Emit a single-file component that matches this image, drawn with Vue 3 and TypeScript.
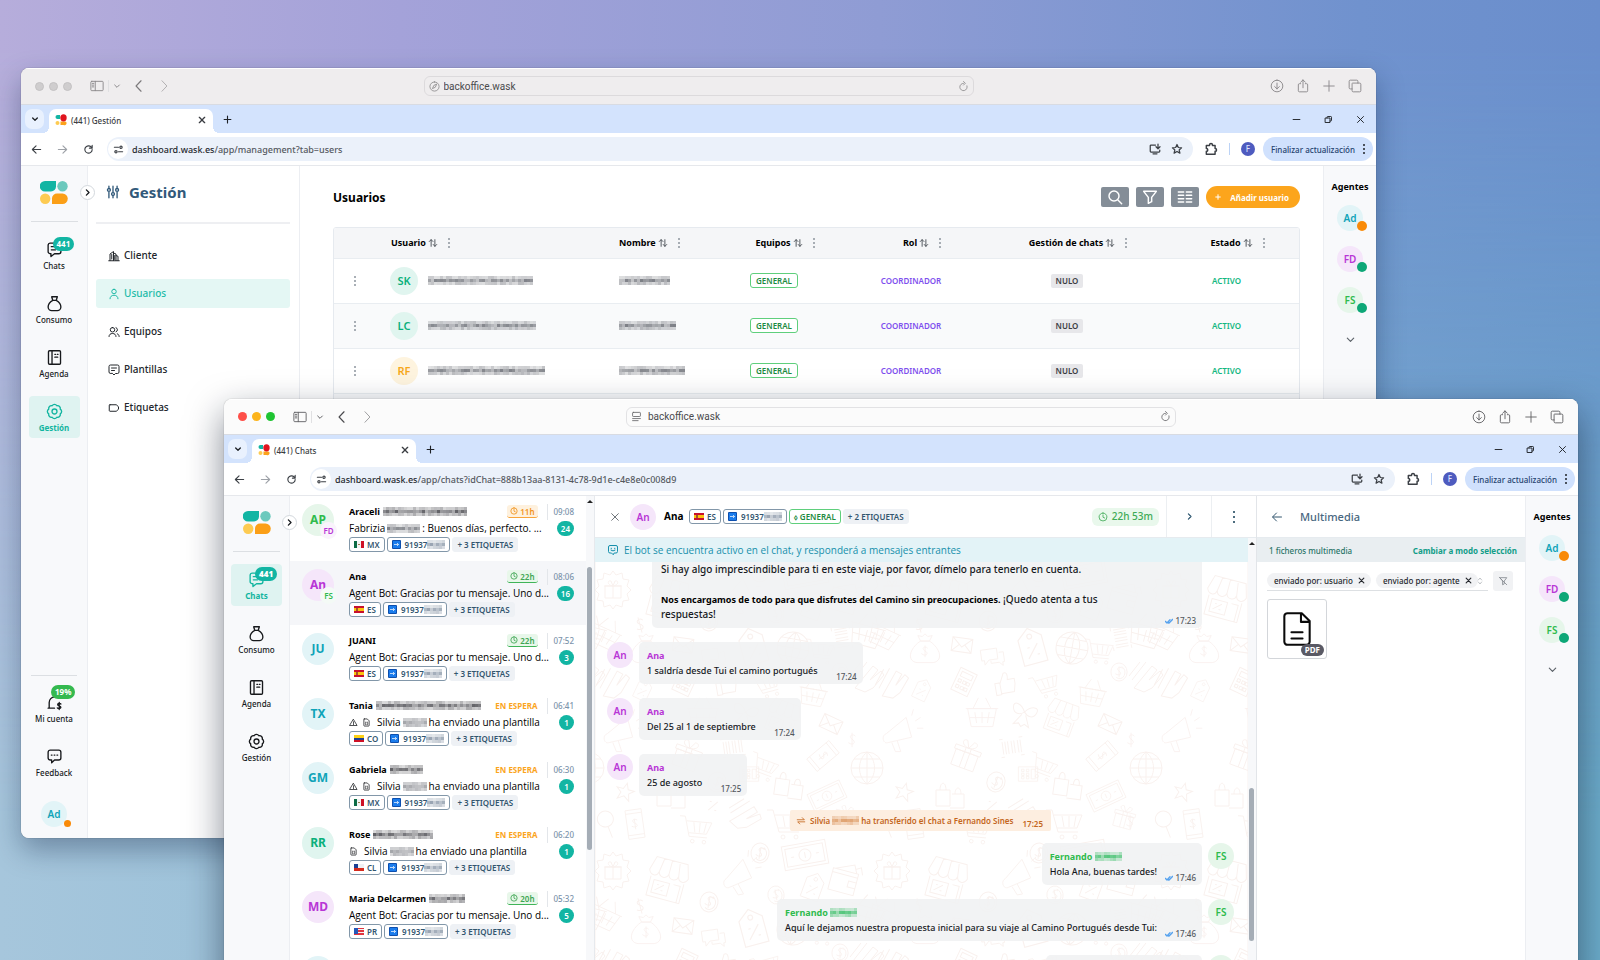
<script setup lang="ts">
import { h } from 'vue'

function scallop(lobes: number, radius: number, arc: number): string {
  const pts = Array.from({ length: lobes }, (_, i) => {
    const a = ((i + 0.5) / lobes) * Math.PI * 2
    return `${(12 + radius * Math.cos(a)).toFixed(2)} ${(12 + radius * Math.sin(a)).toFixed(2)}`
  })
  return `M${pts[0]}` + [...pts.slice(1), pts[0]].map((p) => `A${arc} ${arc} 0 0 1 ${p}`).join('') + 'z'
}

const icons: Record<string, string> = {
  sidebar: 'M3 4h18a1.5 1.5 0 0 1 1.5 1.5v13A1.5 1.5 0 0 1 21 20H3a1.5 1.5 0 0 1-1.500-1.500v-13A1.500 1.500 0 0 1 3 4zM9 4v16M4 7.500h2.500M4 10.500h2.500M4 13.500h2.500',
  down: 'M5 9l7 7 7-7',
  left: 'M15.500 3L7 12l8.500 9',
  right: 'M8.500 3L17 12l-8.500 9',
  next: 'M9 5l7 7-7 7',
  compass: 'M12 2a10 10 0 1 0 0 20 10 10 0 0 0 0-20zM16.500 7.500l-2.800 6.200-6.200 2.800 2.800-6.200z',
  page: 'M5 3h14a1.500 1.500 0 0 1 1.500 1.500v6A1.500 1.500 0 0 1 19 12H5a1.500 1.500 0 0 1-1.500-1.500v-6A1.500 1.500 0 0 1 5 3zM3.500 16.500h17M3.500 21h12',
  refresh: 'M12 5a8 8 0 1 0 7.600 5.500M12 1l4 4-4 4',
  download: 'M12 2a10 10 0 1 0 0 20 10 10 0 0 0 0-20zM12 7v10M8 13l4 4 4-4',
  share: 'M8 8H6a2 2 0 0 0-2 2v10a2 2 0 0 0 2 2h12a2 2 0 0 0 2-2V10a2 2 0 0 0-2-2h-2M12 15V1.500M8 5.500l4-4 4 4',
  plus: 'M12 3v18M3 12h18',
  tabs: 'M8 7h12a2 2 0 0 1 2 2v11a2 2 0 0 1-2 2H9a2 2 0 0 1-2-2V8M7 17H4a2 2 0 0 1-2-2V4a2 2 0 0 1 2-2h11a2 2 0 0 1 2 2v3',
  close: 'M4 4l16 16M20 4L4 20',
  min: 'M3 12h18',
  restore: 'M4 8h12v12H4zM8 8V6q0-2 2-2h8q2 0 2 2v8q0 2-2 2h-2',
  back: 'M21 12H4M11 4l-8 8 8 8',
  fwd: 'M3 12h17M13 4l8 8-8 8',
  reload: 'M20 12a8 8 0 1 1-2.300-5.600L20 9M20 3v6h-6',
  tune: 'M3 7h9M12 17h9M15 7h.01M17.500 4.500a2.500 2.500 0 1 0 0 5 2.500 2.500 0 0 0 0-5zM6.500 14.500a2.500 2.500 0 1 0 0 5 2.500 2.500 0 0 0 0-5z',
  install: 'M13 4H4a1.500 1.500 0 0 0-1.500 1.500v11A1.500 1.500 0 0 0 4 18h16a1.500 1.500 0 0 0 1.500-1.500V14M8 21.500h8M18 2v9M14 7.500l4 4 4-4',
  star: 'M12 3l2.700 6 6.500.600-4.900 4.300 1.500 6.400L12 17l-5.800 3.300 1.500-6.400-4.900-4.300 6.500-.600z',
  puzzle: 'M4 6h5.500V5a2.500 2.500 0 0 1 5 0v1H19v5a2.500 2.500 0 0 1 0 5v5H4v-5a2.500 2.500 0 0 0 0-5z',
  chats: 'M16 18h-4l-5 4v-4H6a3 3 0 0 1-3-3V6a3 3 0 0 1 3-3h12a3 3 0 0 1 3 3v9a3 3 0 0 1-3 3h-2M7.500 8h9M7.500 12.500h6',
  bag: 'M8 2.500h8l-1.500 5h-5zM9.500 7.500C6 9.500 3 13 3 17a5 5 0 0 0 5 5h8a5 5 0 0 0 5-5c0-4-3-7.500-6.500-9.500',
  agenda: 'M5 2.500h14A1.500 1.500 0 0 1 20.500 4v16a1.500 1.500 0 0 1-1.500 1.500H5A1.500 1.500 0 0 1 3.500 20V4A1.500 1.500 0 0 1 5 2.500zM8.500 2.500v19M12.500 7.500h1M16 7.500h1M12.500 11.500h4',
  gear: scallop(8, 8.8, 3.9) + 'M12 8.500a3.500 3.500 0 1 0 0 7 3.500 3.500 0 0 0 0-7z',
  account: 'M3 20h9M4.500 20v-8A8 8 0 0 1 12 4M21 14c-1-1-4.500-1-4.500 1s4.500 1.500 4.500 3.800-4 2.200-5 .800M18.700 12v10',
  feedback: 'M16 17h-4l-4 4v-4H6a3 3 0 0 1-3-3V6a3 3 0 0 1 3-3h12a3 3 0 0 1 3 3v8a3 3 0 0 1-3 3h-2M7.500 10h1M11.500 10h1M15.500 10h1',
  sliders: 'M5 2v4M5 11v11M12 2v11M12 18v4M19 2v4M19 11v11M5 6a2.500 2.500 0 1 0 0 5 2.500 2.500 0 0 0 0-5zM12 13a2.500 2.500 0 1 0 0 5 2.500 2.500 0 0 0 0-5zM19 6a2.500 2.500 0 1 0 0 5 2.500 2.500 0 0 0 0-5z',
  building: 'M1.500 21.500h21M4 21V8l7-5v18M11 6l5 2v13M16 11l4 1.500V21M7.500 9v9M13.500 11v8',
  user: 'M12 2.500a4.500 4.500 0 1 0 0 9 4.500 4.500 0 0 0 0-9zM4 21.500c0-4 3-7 8-7s8 3 8 7',
  users: 'M9 3a4.500 4.500 0 1 0 0 9 4.500 4.500 0 0 0 0-9zM2 21c0-4 3-6 7-6s7 2 7 6M16 3.300a4.500 4.500 0 0 1 0 8.400M18.500 15.500c2.500 1 3.800 3 3.800 5.500',
  template: 'M9 19l3 3 3-3h4a3 3 0 0 0 3-3V5a3 3 0 0 0-3-3H5a3 3 0 0 0-3 3v11a3 3 0 0 0 3 3zM7 8h10M7 13h6',
  label: 'M4 5.500h12.500l4.500 4v5l-4.500 4H4a1.500 1.500 0 0 1-1.500-1.500V7A1.500 1.500 0 0 1 4 5.500z',
  sort: 'M7.500 20V4M3 8.500L7.500 4 12 8.500M16.500 4v16M12.500 15.500l4 4.500 4.500-4.500',
  search: 'M10.500 3a7.500 7.500 0 1 0 0 15 7.500 7.500 0 0 0 0-15zM16 16l6 6',
  filter: 'M2.500 3.500h19l-7 9V19l-5 2.500v-9z',
  filterOff: 'M6 4h15l-6 8v7l-4 2v-9L5 5M3 3l18 18',
  columns: 'M2 4.500h8M2 9.500h8M2 14.500h8M2 19.500h8M14 4.500h8M14 9.500h8M14 14.500h8M14 19.500h8',
  clock: 'M12 2.500a9.500 9.500 0 1 0 0 19 9.500 9.500 0 0 0 0-19zM12 7v5.500l4 2',
  warn: 'M12 4l9.500 16h-19zM12 10v4.500M12 16.500v1',
  file: 'M6 2.500h8l5 5V20a1.500 1.500 0 0 1-1.500 1.500h-11A1.500 1.500 0 0 1 5 20V4A1.500 1.500 0 0 1 6 2.500zM10 11v3l-1 1 1 1v2M14 11v3l1 1-1 1v2',
  doc: 'M6 2h9l5 5v13a2 2 0 0 1-2 2H6a2 2 0 0 1-2-2V4a2 2 0 0 1 2-2zM14.500 2v5.500H20M8.500 14h7M8.500 18h7',
  swap: 'M3 9h17l-5-5M21 14H4l5 5',
  bot: 'M15 18h3a3 3 0 0 0 3-3V6a3 3 0 0 0-3-3H6a3 3 0 0 0-3 3v9a3 3 0 0 0 3 3h3l3 3zM8.500 8.500v1M15.500 8.500v1M8 12.500q4 3 8 0',
  checks: 'M1 13l5 5L15 8M10 17l1.500 1.500L23 7',
  updown: 'M7 9l5-6 5 6M7 15l5 6 5-6',
}
const Icon = (p: { n: string }) =>
  h('svg', { viewBox: '0 0 24 24', class: 'ic', 'aria-hidden': 'true' }, [h('path', { d: icons[p.n] })])
Icon.props = ['n']

/* Redacted text: a strip of blocky cells */
const tones: Record<string, [number, number, number]> = {
  dark: [60, 60, 66],
  mid: [95, 98, 106],
  soft: [125, 140, 158],
  green: [40, 185, 90],
  orange: [215, 140, 80],
}
const Mosaic = (p: { w: number; tone: string }) => {
  const c = tones[p.tone] ?? tones.mid
  const cells = []
  const n = Math.floor(p.w / 3)
  for (let i = 0; i < n; i++) {
    for (let r = 0; r < 3; r++) {
      const seed = Math.abs(Math.sin((i + 1) * 12.9 + r * 78.2 + p.w * 3.1) * 43758.5) % 1
      const base = r === 1 ? 0.62 : r === 0 ? 0.3 : 0.34
      const a = (base * (0.6 + seed * 0.7)).toFixed(2)
      cells.push(h('rect', { x: i * 3, y: r * 3, width: 3, height: 3, fill: `rgba(${c.join(',')},${a})` }))
    }
  }
  return h('svg', { class: 'mosaic', width: p.w, height: 9, 'shape-rendering': 'crispEdges', 'aria-hidden': 'true' }, cells)
}
Mosaic.props = ['w', 'tone']

const flags: Record<string, [string, number, number, number, number][]> = {
  ES: [['#c8102e', 0, 0, 10, 7], ['#fcc40f', 0, 2, 10, 3], ['#a5532b', 2, 2, 2, 3]],
  MX: [['#f4f4f4', 0, 0, 10, 7], ['#0d6b45', 0, 0, 3, 7], ['#ce1126', 7, 0, 3, 7], ['#a08050', 4, 3, 2, 1]],
  CO: [['#fcd116', 0, 0, 10, 7], ['#1b3f94', 0, 3, 10, 2], ['#ce1126', 0, 5, 10, 2]],
  CL: [['#eef0f4', 0, 0, 10, 7], ['#d52b1e', 0, 4, 10, 3], ['#1b3f94', 0, 0, 4, 4]],
  PR: [['#e2353f', 0, 0, 10, 7], ['#f4f4f4', 0, 1, 10, 1], ['#f4f4f4', 0, 4, 10, 1], ['#2458b8', 0, 0, 4, 6]],
}
const Flag = (p: { c: string }) =>
  h('svg', { class: 'flag', viewBox: '0 0 10 7', 'aria-hidden': 'true' },
    flags[p.c].map(([fill, x, y, width, height]) => h('rect', { fill, x, y, width, height })))
Flag.props = ['c']

const Arrow = () =>
  h('svg', { class: 'arrow', viewBox: '0 0 9 9', 'aria-hidden': 'true' }, [
    h('rect', { width: 9, height: 9, rx: 1, fill: '#0d4fae' }),
    h('rect', { x: 1, y: 1, width: 7, height: 7, fill: '#1b7cec' }),
    h('path', { d: 'M2 4.500h4.500M5 3l1.500 1.500L5 6', fill: 'none', stroke: '#fff', 'stroke-width': 0.7 }),
  ])

interface Win { kind: 'manage' | 'chats'; site: string; tab: string; domain: string; path: string; active: string }
const windows: Win[] = [
  { kind: 'manage', site: 'compass', tab: '(441) Gestión', domain: 'dashboard.wask.es', path: '/app/management?tab=users', active: 'Gestión' },
  { kind: 'chats', site: 'page', tab: '(441) Chats', domain: 'dashboard.wask.es', path: '/app/chats?idChat=888b13aa-8131-4c78-9d1e-c4e8e0c008d9', active: 'Chats' },
]
const nav = [
  { n: 'Chats', i: 'chats', badge: '441' },
  { n: 'Consumo', i: 'bag', badge: '' },
  { n: 'Agenda', i: 'agenda', badge: '' },
  { n: 'Gestión', i: 'gear', badge: '' },
]
const menu = [
  { n: 'Cliente', i: 'building' },
  { n: 'Usuarios', i: 'user' },
  { n: 'Equipos', i: 'users' },
  { n: 'Plantillas', i: 'template' },
  { n: 'Etiquetas', i: 'label' },
]
const agents = [
  { t: 'Ad', c: 'cyan', s: 'away' },
  { t: 'FD', c: 'purple', s: 'online' },
  { t: 'FS', c: 'green', s: 'online' },
]
const columns = ['Usuario', 'Nombre', 'Equipos', 'Rol', 'Gestión de chats', 'Estado']
const users = [
  { t: 'SK', c: 'emerald', mail: 105, name: 51 },
  { t: 'LC', c: 'emerald', mail: 108, name: 57 },
  { t: 'RF', c: 'amber', mail: 117, name: 66 },
]
interface Chat {
  t: string; c: string; sub?: string; subc?: string; name: string; nw: number; wait: string; tone?: string
  time: string; icons?: string[]; a: string; mw?: number; b?: string; n: string; flag: string
}
const bot = 'Agent Bot: Gracias por tu mensaje. Uno d...'
const tpl = 'ha enviado una plantilla'
const chats: Chat[] = [
  { t: 'AP', c: 'green', sub: 'FD', subc: 'purple', name: 'Araceli', nw: 84, wait: '11h', tone: 'warm', time: '09:08', a: 'Fabrizia', mw: 33, b: ': Buenos días, perfecto. ...', n: '24', flag: 'MX' },
  { t: 'An', c: 'purple', sub: 'FS', subc: 'green', name: 'Ana', nw: 0, wait: '22h', time: '08:06', a: bot, n: '16', flag: 'ES' },
  { t: 'JU', c: 'cyan', name: 'JUANI', nw: 0, wait: '22h', time: '07:52', a: bot, n: '3', flag: 'ES' },
  { t: 'TX', c: 'cyan', name: 'Tania', nw: 105, wait: '', time: '06:41', icons: ['warn', 'file'], a: 'Silvia', mw: 24, b: tpl, n: '1', flag: 'CO' },
  { t: 'GM', c: 'cyan', name: 'Gabriela', nw: 33, wait: '', time: '06:30', icons: ['warn', 'file'], a: 'Silvia', mw: 24, b: tpl, n: '1', flag: 'MX' },
  { t: 'RR', c: 'emerald', name: 'Rose', nw: 60, wait: '', time: '06:20', icons: ['file'], a: 'Silvia', mw: 24, b: tpl, n: '1', flag: 'CL' },
  { t: 'MD', c: 'purple', name: 'Maria Delcarmen', nw: 36, wait: '20h', time: '05:32', a: bot, n: '5', flag: 'PR' },
]
const incoming = [
  { text: '1 saldría desde Tui el camino portugués', time: '17:24' },
  { text: 'Del 25 al 1 de septiembre', time: '17:24' },
  { text: '25 de agosto', time: '17:25' },
]
const outgoing = [
  { text: 'Hola Ana, buenas tardes!', time: '17:46' },
  { text: 'Aquí le dejamos nuestra propuesta inicial para su viaje al Camino Portugués desde Tui:', time: '17:46' },
]

/* Wallpaper doodles: shape, centre x, centre y, rotation, scale */
const shapes: Record<string, string> = {
  badge: 'M-18 0l4-4-2-6 6-1 1-6 6 2 3-4 3 4 6-2 1 6 6 1-2 6 4 4-4 4 2 6-6 1-1 6-6-2-3 4-3-4-6 2-1-6-6-1 2-6zM-8-4h16v12h-16zM-9-4h18M0-4v12M0-4c-6-1-6-6-2-5l2 5 2-5c4-1 4 4-2 5',
  store: 'M-20-4l4-14h32l4 14c-2 6-9 6-10 0-1 6-9 6-10 0-1 6-9 6-10 0-1 6-8 6-10 0zM-10-4l2-14M0-4v-14M10-4l-2-14M-17 2v20h34V2M-13 5h16v13h-16zM7 5h7v17M-10 15l8-7M-9 9h2M-4 14h2',
  mega: 'M-14 4l22-18 6 22-26 6c-6 2-8-8-2-10zM-8 14l4 10h6l-4-12M18-10l6-4M20-2l7 0M14-16l2-7',
  coin: 'M0-10a9 10 0 1 0 0 20 9 10 0 0 0 0-20zM3-6a6 7 0 1 1-6 12M4-4c-3-3-8 0-4 3s1 6-4 3M0-6V6',
  note: 'M-22-12h44v24h-44zM-19-9h38v18h-38zM0-6a6 6 0 1 0 0 12 6 6 0 0 0 0-12zM-14 0h3M11 0h3M0-3v6',
  wallet: 'M-14-8h26v22h-26zM-12-8l18-8 4 8M4 1h8v6H4zM-14-4h26M8-12l5-3 3 7',
  tag: 'M-10-8L0-16 10-8V14h-20zM0-11a2 2 0 1 0 0 4 2 2 0 0 0 0-4zM-5 9L5-2M-4 0h2M3 7h2',
  basket: 'M-16-6h32l-4 20h-24zM-18-6h36M-10-6l6-12M10-6l-6-12M-8-2l2 12M0-2v12M8-2l-2 12M-14 4h28',
  money: 'M-5-10c-12 8-16 22-4 24h18c12-2 8-16-4-24zM-5-10l-3-6 5 1 3-3 3 3 5-1-3 6zM3-2c-3-3-8 0-3 3s1 7-4 3M0-5V8',
  mail: 'M-10-7h20v14h-20zM-10-7L0 2l10-9M-10 7l7-7M10 7L3 0',
  chat: 'M-12-8H6V4H-4l-5 5V4h-3zM8-3h5v11h-2v4l-4-4H-2V5',
  globe: 'M0-16a16 16 0 1 0 0 32 16 16 0 0 0 0-32zM-16 0h32M0-16v32M-13-9h26M-13 9h26M0-16c-10 8-10 24 0 32M0-16c10 8 10 24 0 32',
  cart: 'M-20-12h6l6 22h20M-12-7h28l-5 13h-20M-4 13a2 2 0 1 0 0 4 2 2 0 0 0 0-4zM9 13a2 2 0 1 0 0 4 2 2 0 0 0 0-4zM-4-6l2 11M3-6v11M10-6l-2 11',
  bars: 'M-10-8v14M-7-8v14M-4-8v14M0-8v14M3-8v14M7-8v14M10-8v14M-13-11h4M9-11h4M-13 9h4M9 9h4',
  calc: 'M-9-12H9v24H-9zM-6-9H6v5H-6zM-6-1h3v3h-3zM-1-1h3v3h-3zM3-1h3v3H3zM-6 5h3v3h-3zM-1 5h3v3h-3zM3 5h3v3H3z',
  thumb: 'M-10-2h5v12h-5zM-5-1l5-10c4-1 4 3 3 7h7v5l-2 8H-5',
  bow: 'M0-2c-5-8-14-9-12-2s8 6 12 2c4 4 10 5 12-2s-7-6-12 2zM-2 1l-6 11 5-2 3 3 3-3 5 2L2 1',
  gift: 'M-13-4h26v18h-26zM-15-9h30v5h-30zM-3-9v23M3-9v23M0-9c-10-1-10-9-4-8l4 8 4-8c6-1 6 7-4 8',
  star: 'M0-9l2.500 6H9L4 1l2 7-6-4-6 4 2-7-5-4h6.500z',
  phone: 'M-9-16H9v32H-9zM-9-12H9M-9 12H9M3-4c-3-3-8 0-3 3s1 6-4 3M0-6V6',
  lens: 'M0-9a8 8 0 1 0 0 16 8 8 0 0 0 0-16zM5 5l8 9',
  bags: 'M-14-6H0v16h-14zM-10-6c0-9 6-9 6 0M2-2h12v14H0M5-2c0-8 6-8 6 0',
  hand: 'M-12 12L6-10l5 4-8 10 11-9 3 4L6 12-2 16zM-14 4L0-14M-17 0L-6-14',
  pct: 'M-4 5L4-5M-4-4h2M2 4h2',
  dollar: 'M4-4c-3-4-9 0-4 3s2 8-4 4M0-8V8',
}
const doodles: [string, number, number, number, number][] = [
  ['badge', 18, 30, 0, 1], ['store', 73, 37, 15, 1], ['mega', 143, 32, -10, 0.9], ['coin', 165, 12, 10, 1],
  ['note', 210, 14, -10, 1], ['wallet', 250, 38, 15, 1], ['tag', 218, 46, 20, 0.9], ['coin', 181, 54, -10, 0.9],
  ['coin', 114, 61, 10, 1], ['dollar', 45, 65, -15, 1], ['basket', 10, 74, 25, 0.9], ['money', 51, 90, 0, 0.9],
  ['mail', 88, 85, 8, 1], ['chat', 118, 96, -8, 0.9], ['tag', 158, 87, -15, 1.2], ['globe', 198, 88, 10, 1],
  ['cart', 226, 90, 5, 0.8], ['bars', 246, 78, 80, 0.9], ['basket', 272, 72, 15, 1], ['hand', 18, 122, -10, 1],
  ['tag', 48, 130, 25, 0.7], ['calc', 90, 122, 25, 1], ['thumb', 131, 124, -10, 1], ['cart', 172, 124, -15, 0.8],
  ['basket', 218, 134, 10, 0.8], ['coin', 245, 112, 0, 0.9], ['hand', 272, 116, 0, 1], ['basket', 108, 154, 0, 0.9],
  ['bow', 150, 154, 15, 1], ['mega', 25, 170, 0, 0.9], ['store', 188, 156, 20, 0.8], ['mail', 236, 164, 25, 1],
  ['dollar', 257, 180, 0, 0.9], ['gift', 92, 196, 20, 0.9], ['bars', 138, 188, -8, 0.9], ['cart', 170, 206, 20, 0.8],
  ['phone', 228, 196, 50, 0.9], ['globe', 272, 208, 0, 1], ['star', 30, 232, 15, 1], ['bags', 76, 236, 0, 1],
  ['coin', 122, 222, 20, 1], ['calc', 154, 214, 90, 0.8], ['bags', 194, 226, 8, 1], ['note', 232, 236, -25, 0.8],
  ['pct', 118, 246, 10, 1], ['hand', 150, 254, 20, 1], ['phone', 40, 264, -8, 0.9], ['lens', 10, 260, 20, 1],
  ['cart', 102, 268, 5, 0.9], ['dollar', 256, 262, 0, 0.9], ['gift', 250, 258, 15, 0.7], ['cart', 192, 262, 0, 1],
]
const wraps = [[0, 0], [-279, 0], [279, 0], [0, -281], [0, 281]]
</script>

<template>
  <div class="desktop">
    <article v-for="w in windows" :key="w.kind" class="window" :class="w.kind">
      <header class="titlebar">
        <div class="tleft">
          <span class="lights"><i></i><i></i><i></i></span>
          <button class="gh side" aria-label="Barra lateral"><Icon n="sidebar" /></button>
          <span class="tick"></span>
          <button class="gh small" aria-label="Grupos de pestañas"><Icon n="down" /></button>
          <button class="gh prev" aria-label="Atrás"><Icon n="left" /></button>
          <button class="gh faint" aria-label="Adelante"><Icon n="right" /></button>
        </div>
        <label class="address">
          <Icon :n="w.site" />
          <input type="text" value="backoffice.wask" aria-label="Dirección" />
          <Icon n="refresh" />
        </label>
        <div class="tright">
          <button v-for="i in ['download', 'share', 'plus', 'tabs']" :key="i" class="gh" :aria-label="i"><Icon :n="i" /></button>
        </div>
      </header>

      <div class="tabstrip">
        <button class="tabmenu" aria-label="Buscar pestañas"><Icon n="down" /></button>
        <div class="tab">
          <svg class="fav" viewBox="0 0 12 12" aria-hidden="true">
            <path d="M2.500 1H5v4H2.500A2 2 0 0 1 2.500 1z" fill="#12b5a3" />
            <circle cx="2.500" cy="9" r="2" fill="#fdcb52" />
            <path d="M5.500 7.500h5A2 2 0 0 1 8.500 11h-3z" fill="#fba21b" />
            <ellipse cx="8.500" cy="3.800" rx="3.200" ry="3.600" fill="#e0141e" />
          </svg>
          <span>{{ w.tab }}</span>
          <button class="gh x" aria-label="Cerrar pestaña"><Icon n="close" /></button>
        </div>
        <button class="gh add" aria-label="Nueva pestaña"><Icon n="plus" /></button>
        <div class="winctl">
          <button class="gh" aria-label="Minimizar"><Icon n="min" /></button>
          <button class="gh" aria-label="Restaurar"><Icon n="restore" /></button>
          <button class="gh" aria-label="Cerrar"><Icon n="close" /></button>
        </div>
      </div>

      <div class="toolbar">
        <button class="gh" aria-label="Atrás"><Icon n="back" /></button>
        <button class="gh dim" aria-label="Adelante"><Icon n="fwd" /></button>
        <button class="gh" aria-label="Recargar"><Icon n="reload" /></button>
        <div class="omnibox">
          <span class="siteinfo"><Icon n="tune" /></span>
          <a class="url" href="#">{{ w.domain }}<span>{{ w.path }}</span></a>
          <button class="gh" aria-label="Instalar"><Icon n="install" /></button>
          <button class="gh" aria-label="Favoritos"><Icon n="star" /></button>
        </div>
        <button class="gh" aria-label="Extensiones"><Icon n="puzzle" /></button>
        <span class="sep"></span>
        <span class="profile">F</span>
        <button class="update">Finalizar actualización <span class="dots3"><i></i><i></i><i></i></span></button>
      </div>

      <div class="app">
        <nav class="rail">
          <svg class="logo" viewBox="0 0 28 23" aria-hidden="true">
            <path d="M5 0h11v5.500a5 5 0 0 1-5 5H5A5.200 5.200 0 0 1 5 0z" fill="#12b5a3" />
            <circle cx="22.500" cy="5.300" r="5.200" fill="#6cc9bd" />
            <circle cx="5.200" cy="17.700" r="5.200" fill="#fdcb52" />
            <path d="M17 12.500h5.500a5.200 5.200 0 0 1 0 10.500H12v-5.500a5 5 0 0 1 5-5z" fill="#fb9f17" />
          </svg>
          <button class="toggle" aria-label="Expandir menú"><Icon n="next" /></button>
          <div class="items">
            <a v-for="n in nav" :key="n.n" href="#" class="item" :class="{ on: n.n === w.active }">
              <Icon :n="n.i" /><span>{{ n.n }}</span>
              <b v-if="n.badge" class="count">{{ n.badge }}</b>
            </a>
          </div>
          <div v-if="w.kind === 'manage'" class="foot">
            <a href="#" class="item"><Icon n="account" /><span>Mi cuenta</span><b class="count lime">19%</b></a>
            <a href="#" class="item"><Icon n="feedback" /><span>Feedback</span></a>
            <span class="av cyan mid">Ad<i class="dot away sm"></i></span>
          </div>
        </nav>

        <template v-if="w.kind === 'manage'">
          <aside class="panel">
            <h1><Icon n="sliders" />Gestión</h1>
            <a v-for="m in menu" :key="m.n" href="#" :class="{ on: m.n === 'Usuarios' }"><Icon :n="m.i" />{{ m.n }}</a>
          </aside>
          <main class="content">
            <div class="head">
              <h2>Usuarios</h2>
              <button class="sq" aria-label="Buscar"><Icon n="search" /></button>
              <button class="sq" aria-label="Filtrar"><Icon n="filter" /></button>
              <button class="sq" aria-label="Columnas"><Icon n="columns" /></button>
              <button class="new"><Icon n="plus" />Añadir usuario</button>
            </div>
            <div class="tablebox">
              <table>
                <colgroup><col class="c0" /><col class="c1" /><col class="c2" /><col class="c3" /><col class="c4" /><col class="c5" /><col class="c6" /></colgroup>
                <thead>
                  <tr>
                    <th></th>
                    <th v-for="(c, i) in columns" :key="c" :class="{ mid: i > 1 }">
                      <span class="thc">{{ c }}<Icon n="sort" /><span class="dots3 gray"><i></i><i></i><i></i></span></span>
                    </th>
                  </tr>
                </thead>
                <tbody>
                  <tr v-for="u in users" :key="u.t">
                    <td><span class="dots3 gray"><i></i><i></i><i></i></span></td>
                    <td><span class="who"><span class="av big" :class="u.c">{{ u.t }}</span><Mosaic :w="u.mail" tone="mid" /></span></td>
                    <td><Mosaic :w="u.name" tone="mid" /></td>
                    <td class="mid"><span class="tag gen">GENERAL</span></td>
                    <td class="mid role">COORDINADOR</td>
                    <td class="mid"><span class="null">NULO</span></td>
                    <td class="mid state">ACTIVO</td>
                  </tr>
                  <tr><td colspan="7"></td></tr>
                </tbody>
              </table>
            </div>
          </main>
        </template>

        <template v-else>
          <section class="list">
            <div class="rows">
              <a v-for="(c, i) in chats" :key="i" href="#" class="row" :class="{ on: i === 1 }">
                <span class="av xl" :class="c.c">{{ c.t }}<span v-if="c.sub" class="av sub" :class="c.subc">{{ c.sub }}</span></span>
                <span class="body">
                  <span class="l1">
                    <b class="name">{{ c.name }}</b><Mosaic v-if="c.nw" :w="c.nw" tone="dark" />
                    <span v-if="c.wait" class="wait" :class="c.tone"><Icon n="clock" />{{ c.wait }}</span>
                    <span v-else class="hold">EN ESPERA</span>
                    <span class="time">{{ c.time }}</span>
                  </span>
                  <span class="l2">
                    <Icon v-for="ic in c.icons" :key="ic" :n="ic" />
                    <span class="msgt">{{ c.a }}<template v-if="c.b"><Mosaic :w="c.mw ?? 24" tone="mid" />{{ c.b }}</template></span>
                    <b class="num">{{ c.n }}</b>
                  </span>
                  <span class="l3">
                    <span class="tag"><Flag :c="c.flag" />{{ c.flag }}</span>
                    <span class="tag"><Arrow />91937<Mosaic :w="18" tone="soft" /></span>
                    <span class="tag plain">+ 3 ETIQUETAS</span>
                  </span>
                </span>
              </a>
              <a href="#" class="row" aria-label="Siguiente chat"><span class="av xl cyan"></span></a>
            </div>
            <div class="scroll"><span class="up"></span><span class="thumb"></span></div>
          </section>

          <section class="chat">
            <header class="chead">
              <button class="gh" aria-label="Cerrar chat"><Icon n="close" /></button>
              <span class="av mid purple">An</span>
              <b class="name">Ana</b>
              <span class="tags">
                <span class="tag"><Flag c="ES" />ES</span>
                <span class="tag"><Arrow />91937<Mosaic :w="18" tone="soft" /></span>
                <span class="tag gen">⬨ GENERAL</span>
                <span class="tag plain">+ 2 ETIQUETAS</span>
              </span>
              <span class="timer"><Icon n="clock" />22h 53m</span>
              <button class="cell" aria-label="Siguiente"><Icon n="next" /></button>
              <button class="cell" aria-label="Opciones"><span class="dots3 navy"><i></i><i></i><i></i></span></button>
            </header>
            <div class="stage">
              <div class="flow">
                <svg class="paper" aria-hidden="true">
                  <defs>
                    <symbol v-for="(d, k) in shapes" :id="'d-' + k" :key="k" overflow="visible"><path :d="d" /></symbol>
                    <pattern id="doodle" width="279" height="281" patternUnits="userSpaceOnUse">
                      <g v-for="(o, j) in wraps" :key="j" :transform="`translate(${o[0]} ${o[1] + 22})`">
                        <use v-for="(d, i) in doodles" :key="i" :href="'#d-' + d[0]" :transform="`translate(${d[1]} ${d[2]}) rotate(${d[3]}) scale(${d[4]})`" />
                      </g>
                    </pattern>
                  </defs>
                  <rect width="100%" height="100%" fill="url(#doodle)" />
                </svg>
                <p class="banner"><Icon n="bot" />El bot se encuentra activo en el chat, y responderá a mensajes entrantes</p>
                <div class="thread">
                  <div class="out first">
                    <div class="bubble">
                      <p>Si hay algo imprescindible para ti en este viaje, por favor, dímelo para tenerlo en cuenta.</p>
                      <p class="para"><b>Nos encargamos de todo para que disfrutes del Camino sin preocupaciones.</b> ¡Quedo atenta a tus<br />respuestas!</p>
                      <span class="at"><Icon n="checks" />17:23</span>
                    </div>
                  </div>
                  <div v-for="m in incoming" :key="m.text" class="in">
                    <span class="av mid purple">An</span>
                    <div class="bubble"><b class="purple">Ana</b><p>{{ m.text }}</p><span class="at">{{ m.time }}</span></div>
                  </div>
                  <p class="notice"><Icon n="swap" />Silvia<Mosaic :w="27" tone="orange" />ha transferido el chat a Fernando Sines<span>17:25</span></p>
                  <div v-for="m in outgoing" :key="m.text" class="out">
                    <div class="bubble"><b class="green">Fernando <Mosaic :w="27" tone="green" /></b><p>{{ m.text }}</p><span class="at"><Icon n="checks" />{{ m.time }}</span></div>
                    <span class="av mid green">FS</span>
                  </div>
                  <div class="out"><div class="bubble tail"></div><span class="av mid green"></span></div>
                </div>
              </div>
              <div class="scroll"><span class="up"></span><span class="thumb"></span></div>
            </div>
          </section>

          <aside class="media">
            <header><button class="gh" aria-label="Volver"><Icon n="back" /></button><h2>Multimedia</h2></header>
            <div class="bar"><span>1 ficheros multimedia</span><a href="#">Cambiar a modo selección</a></div>
            <div class="filters">
              <div class="chips">
                <span class="chip">enviado por: usuario<button class="gh" aria-label="Quitar usuario"><Icon n="close" /></button></span>
                <span class="chip">enviado por: agente<button class="gh" aria-label="Quitar agente"><Icon n="close" /></button></span>
                <Icon n="updown" />
              </div>
              <button class="clear" aria-label="Quitar filtros"><Icon n="filterOff" /></button>
            </div>
            <a href="#" class="filecard"><Icon n="doc" /><b>PDF</b></a>
          </aside>
        </template>

        <aside class="agents">
          <h3>Agentes</h3>
          <span v-for="a in agents" :key="a.t" class="av mid" :class="a.c">{{ a.t }}<i class="dot" :class="a.s"></i></span>
          <button class="gh" aria-label="Más agentes"><Icon n="down" /></button>
        </aside>
      </div>
    </article>
  </div>
</template>

<style>
body { margin: 0; }
</style>

<style scoped>
.desktop {
  position: relative; height: 100vh; overflow: hidden;
  font: 500 10px/15px "Noto Sans", "Open Sans", sans-serif; color: #15181c;
  background: linear-gradient(to right, #a6c6dc 0%, #8fbcd6 40%, #6cacca 100%);
}
.desktop::before {
  content: ""; position: absolute; inset: 0;
  background: linear-gradient(to right, #b6addb 0%, #a4a2d9 25%, #8f9cd4 55%, #7092ce 85%, #6a8ecc 100%);
  -webkit-mask: linear-gradient(to bottom, #000 5%, transparent 85%);
  mask: linear-gradient(to bottom, #000 5%, transparent 85%);
}
*, *::before, *::after { box-sizing: border-box; }
h1, h2, h3, p { margin: 0; font-weight: inherit; }
a { color: inherit; text-decoration: none; }
button { font: inherit; color: inherit; border: 0; padding: 0; background: none; display: flex; align-items: center; justify-content: center; cursor: pointer; }
.ic { width: 12px; height: 12px; flex: none; display: block; fill: none; stroke: currentColor; stroke-width: 2; stroke-linecap: round; stroke-linejoin: round; }
.mosaic { flex: none; vertical-align: -1px; }

.window { position: absolute; display: flex; flex-direction: column; background: #fff; border-radius: 8px; overflow: hidden; }
.manage { top: 68px; bottom: 122px; left: 21px; right: 224px; box-shadow: 0 0 1px rgba(0,0,0,.6), 0 12px 28px rgba(10,25,60,.35); }
.chats { top: 399px; bottom: -208px; left: 224px; right: 22px; box-shadow: 0 0 1px rgba(0,0,0,.5), 0 14px 36px rgba(10,20,40,.5); }

/* Window title bar */
.titlebar { flex: none; height: 37px; display: grid; grid-template-columns: 1fr minmax(200px, 550px) 1fr; align-items: center; background: #fbfbfb; border-bottom: 1px solid #d8dbe2; box-shadow: inset 0 1px #fff; }
.chats .titlebar { height: 36px; }
.manage .titlebar { background: #efedee; color: #8b898b; }
.titlebar .ic { stroke-width: 1.6; width: 14px; height: 14px; }
.chats .titlebar { color: #636366; }
.tleft { display: flex; align-items: center; padding-left: 14px; }
.lights { display: flex; gap: 5px; width: 51px; }
.lights i { width: 9px; height: 9px; border-radius: 50%; background: #cfcdce; border: 1px solid #c4c2c3; }
.chats .lights i { border-color: transparent; background: #fe4f48; background-clip: border-box; }
.chats .lights i:nth-child(2) { background: #fcb41c; }
.chats .lights i:nth-child(3) { background: #1fc432; }
.side { margin-left: 4px; }
.tick { width: 1px; height: 12px; background: #e0e0e2; margin: 0 4px; }
.titlebar .small .ic { width: 8px; height: 8px; stroke-width: 3; }
.titlebar .prev { margin: 0 11px 0 11px; color: #4c4c50; }
.titlebar .prev .ic { stroke-width: 2; }
.manage .prev { color: #7d7b7d; }
.titlebar .faint { opacity: .65; }
.address { display: flex; align-items: center; gap: 4px; height: 20px; padding: 0 4px; border: 1px solid #e2e2e4; border-radius: 6px; }
.chats .address { gap: 6px; }
.manage .address { border-color: #dcdadc; }
.titlebar .address .ic { width: 11px; height: 11px; stroke-width: 1.800; }
.address input { flex: 1; min-width: 0; border: 0; padding: 0; background: none; outline: none; font: 400 10px/15px Roboto, Inter, sans-serif; color: #4a4a4d; }
.tright { display: flex; justify-content: flex-end; gap: 12px; padding-right: 14px; }

/* Tab strip */
.tabstrip { flex: none; height: 28px; display: flex; align-items: center; background: #d3e3fd; padding: 0 11px 0 4px; color: #1f2227; }
.tabmenu { width: 19px; height: 20px; border-radius: 7px; background: #e9f1fe; }
.tabmenu .ic { width: 8px; height: 8px; stroke-width: 4; }
.tab { position: relative; align-self: flex-end; display: flex; align-items: center; gap: 4px; width: 164px; height: 24px; margin-left: 5px; padding: 0 7px 2px 6px; background: #fff; border-radius: 7px 7px 0 0; font-size: 8px; color: #3a3d42; }
.tab::before, .tab::after { content: ""; position: absolute; bottom: 0; width: 6px; height: 6px; }
.tab::before { right: 100%; background: radial-gradient(circle at 0 0, transparent 6px, #fff 6px); }
.tab::after { left: 100%; background: radial-gradient(circle at 100% 0, transparent 6px, #fff 6px); }
.tab span { flex: 1; }
.fav { width: 12px; height: 12px; }
.tab .x .ic { width: 8px; height: 8px; stroke-width: 4; }
.add { margin-left: 10px; }
.add .ic { width: 9px; height: 9px; stroke-width: 3; }
.winctl { display: flex; gap: 23px; margin-left: auto; }
.winctl .ic { width: 9px; height: 9px; stroke-width: 2.500; }

/* Browser toolbar */
.toolbar { flex: none; height: 33px; display: flex; align-items: center; gap: 11px; padding: 0 3px 0 8px; border-bottom: 1px solid #e6e8ec; color: #3c4046; }
.toolbar .ic { width: 14px; height: 14px; stroke-width: 2.500; }
.toolbar > .gh:first-child .ic, .toolbar > .gh:nth-child(2) .ic, .toolbar > .gh:nth-child(3) .ic { width: 11px; height: 11px; margin: 0 2px; }
.toolbar .dim { color: #9ea2a8; }
.omnibox { flex: 1; min-width: 0; display: flex; align-items: center; gap: 10px; height: 24px; border-radius: 12px; background: #ebf1fa; padding: 0 10px 0 1px; }
.omnibox .ic { width: 12px; height: 12px; }
.siteinfo { width: 20px; height: 20px; border-radius: 50%; background: #fff; display: grid; place-items: center; }
.siteinfo .ic { width: 11px; height: 11px; }
.url { flex: 1; margin-left: -6px; font-size: 9px; color: #26292e; white-space: nowrap; overflow: hidden; }
.url span { color: #55595f; }
.sep { width: 1px; height: 12px; background: #bcd3f6; }
.profile { width: 14px; height: 14px; border-radius: 50%; background: #4e5bbf; color: #dfe3ff; font-size: 8px; line-height: 14px; text-align: center; }
.update { height: 24px; padding: 0 8px; gap: 8px; border-radius: 12px; background: #d0e1fd; color: #25436f; font-size: 8px; white-space: nowrap; margin-left: -3px; }
.dots3 { display: inline-flex; flex-direction: column; gap: 2px; color: #1f2227; }
.dots3 i { width: 2px; height: 2px; border-radius: 50%; background: currentColor; }
.dots3.gray { color: #8d959e; }
.dots3.navy { color: #123c55; gap: 3px; }

/* App shell */
.app { flex: 1; min-height: 0; display: flex; }
.rail { position: relative; flex: none; width: 67px; display: flex; flex-direction: column; align-items: center; background: #f8f9fb; border-right: 1px solid #eceef2; }
.chats .rail { width: 66px; }
.logo { width: 28px; height: 23px; margin-top: 15px; }
.toggle { position: absolute; z-index: 2; top: 19px; right: -8px; width: 15px; height: 15px; border-radius: 50%; border: 1px solid #d3d8dd; background: #fff; }
.toggle .ic { width: 9px; height: 9px; stroke-width: 3.500; }
.items { margin-top: 17px; padding-top: 12px; display: flex; flex-direction: column; gap: 12px; border-top: 1px solid #dcdfe3; }
.item { position: relative; width: 46px; height: 42px; display: flex; flex-direction: column; align-items: center; gap: 1px; padding-top: 7px; border-radius: 4px; font-size: 8px; line-height: 14px; white-space: nowrap; color: #17191c; }
.items .item { width: 51px; margin: 0 -2px; }
.item .ic { width: 17px; height: 17px; stroke-width: 1.900; }
.item.on { background: #dff3f1; color: #12b5a0; font-weight: 700; }
.count { position: absolute; top: 3px; left: 24px; height: 14px; padding: 0 4px; border-radius: 7px; background: #12b5a3; color: #fff; font-size: 8px; line-height: 14px; }
.count.lime { background: #34b94f; top: 9px; left: 20px; }
.foot { margin-top: auto; display: flex; flex-direction: column; align-items: center; gap: 4px; border-top: 1px solid #dcdfe3; padding-bottom: 11px; }
.foot .item { height: 50px; padding-top: 18px; }
.foot .av { margin-top: 17px; }

.av { position: relative; flex: none; display: flex; align-items: center; justify-content: center; width: 27px; height: 27px; border-radius: 50%; font-weight: 600; font-size: 10px; line-height: 12px; }
.av.big { width: 28px; height: 28px; font-size: 11px; }
.av.xl { width: 32px; height: 32px; font-size: 12px; }
.av.mid { width: 26px; height: 26px; }
.cyan { background: #e2f4f7; color: #0fa3b8; }
.purple { background: #f5e6fa; color: #b836d6; }
.green { background: #e6f6ea; color: #2fbb4d; }
.emerald { background: #e0f5ef; color: #0bb07b; }
.amber { background: #fef4df; color: #f6a81c; }
.av.sub { position: absolute; right: -3px; bottom: -3px; width: 17px; height: 17px; font-size: 8px; background: #faf3fc; }
.av.sub.green { background: #f4faf6; }
.dot { position: absolute; right: -4px; bottom: 0; width: 10px; height: 10px; border-radius: 50%; }
.dot.sm { width: 7px; height: 7px; }
.away { background: #f98a08; }
.online { background: #0da777; }

.agents { flex: none; width: 53px; display: flex; flex-direction: column; align-items: center; gap: 15px; background: #f8f9fb; border-left: 1px solid #eceef2; padding-top: 13px; }
.agents h3 { font-weight: 700; font-size: 9px; line-height: 15px; margin-bottom: -4px; color: #000; }
.agents .ic { width: 11px; height: 11px; margin-top: 6px; color: #5b6168; stroke-width: 2.500; }

/* Management */
.panel { flex: none; width: 212px; padding: 14px 9px 0 8px; display: flex; flex-direction: column; gap: 9px; border-right: 1px solid #eceef2; }
.panel h1 { display: flex; align-items: center; gap: 9px; height: 44px; margin-bottom: 8px; padding: 0 0 18px 10px; border-bottom: 2px solid #eeeff2; font-weight: 700; font-size: 15px; line-height: 20px; color: #31597a; }
.panel h1 .ic { width: 14px; height: 14px; stroke-width: 2.300; }
.panel a { display: flex; align-items: center; gap: 4px; height: 29px; padding-left: 12px; border-radius: 3px; font-size: 10px; color: #22262b; }
.panel a.on { background: #e4f7f4; color: #23bba8; }
.content { flex: 1; min-width: 0; padding: 20px 23px 0 33px; }
.head { display: flex; align-items: center; gap: 7px; height: 22px; }
.head h2 { flex: 1; font-weight: 700; font-size: 12px; color: #000; }
.sq { width: 28px; height: 20px; border-radius: 2px; background: #848d97; color: #fff; }
.sq .ic { width: 16px; height: 16px; stroke-width: 2.200; }
.new { height: 22px; border-radius: 11px; background: #fca51c; color: #fff; font-weight: 700; font-size: 8px; padding: 0 11px 0 9px; gap: 9px; white-space: nowrap; }
.new .ic { width: 6px; height: 6px; stroke-width: 4; }
.tablebox { margin-top: 19px; border: 1px solid #e6eaef; border-radius: 3px; overflow: hidden; }
table { width: 100%; border-collapse: collapse; table-layout: fixed; }
.c0 { width: 42px; } .c1 { width: 231px; } .c2 { width: 93px; } .c3 { width: 148px; } .c4 { width: 126px; } .c5 { width: 186px; } .c6 { width: 140px; }
th { height: 30px; padding: 0 0 0 15px; background: #f5f6f8; text-align: left; font-weight: 700; font-size: 9px; color: #000; white-space: nowrap; }
th:nth-child(3) { padding-left: 12px; }
th.mid { text-align: center; padding-left: 22px; }
th:last-child, td:last-child { padding-right: 7px; }
.thc { display: inline-flex; align-items: center; gap: 2px; }
.thc .ic { width: 10px; height: 10px; color: #50565d; stroke-width: 2.300; }
.thc .dots3, td .dots3 { gap: 2px; }
.thc .dots3 { margin-left: 8px; }
td { height: 45px; padding: 0; border-top: 1px solid #e9edf1; vertical-align: middle; }
td:first-child { text-align: center; }
td:nth-child(2) { padding-left: 14px; }
td:nth-child(3) { padding-left: 12px; }
td.mid { text-align: center; }
td .dots3 { vertical-align: middle; }
tbody tr:nth-child(even) { background: #f9fafb; }
.who { display: flex; align-items: center; gap: 10px; }
td .mosaic { display: block; }
.role { color: #7e50ee; font-weight: 600; font-size: 8px; }
.state { color: #14b882; font-weight: 600; font-size: 8px; }
.null { display: inline-block; padding: 0 5px; border-radius: 2px; background: #e7e7ea; font-weight: 600; font-size: 8px; line-height: 14px; color: #3b3d42; }

.tag { display: inline-flex; align-items: center; gap: 3px; height: 15px; padding: 0 4px; border: 1px solid #8297a9; border-radius: 3px; background: #fff; color: #33566f; font-weight: 600; font-size: 8px; line-height: 13px; white-space: nowrap; }
.tag .mosaic { margin-left: -3px; }
.tag.plain { border-color: #eef1f5; background: #eef1f5; }
.tag.gen { border-color: #5fcf7c; color: #1d8a3f; }
td .tag.gen { padding: 0 5px; }
.flag { width: 10px; height: 7px; flex: none; }
.arrow { width: 9px; height: 9px; flex: none; margin-right: 1px; }

/* Chat list */
.list { flex: none; width: 305px; display: flex; border-right: 1px solid #e6e9ed; }
.rows { flex: 1; min-width: 0; overflow: hidden; }
.row { display: flex; gap: 15px; height: 64px; padding: 7px 12px 0; }
.row:nth-child(odd) { height: 65px; }
.row.on { background: #f5f6f9; }
.row .xl { margin-top: 1px; font-weight: 700; }
.body { flex: 1; min-width: 0; display: flex; flex-direction: column; }
.l1 { display: flex; align-items: center; height: 17px; }
.l1 .name { font-weight: 700; font-size: 9px; color: #000; margin-right: 3px; white-space: nowrap; }
.wait, .hold { margin-left: auto; margin-right: 9px; font-size: 8px; font-weight: 600; }
.hold { font-weight: 700; }
.wait { display: flex; align-items: center; gap: 2px; height: 13px; padding: 0 3px; border-radius: 3px; background: #e8f7ea; border-bottom: 1px solid #3fb458; color: #3fa653; }
.wait.warm { background: #fef1de; border-color: #f8a43a; color: #f2931c; }
.wait .ic { width: 8px; height: 8px; stroke-width: 2.500; }
.hold { color: #fba51d; }
.time { border-left: 1px solid #e3e6ea; padding-left: 6px; color: #7b93ab; font-size: 8px; line-height: 16px; }
.l2 { display: flex; align-items: center; justify-content: space-between; height: 17px; gap: 4px; }
.l2 .ic { width: 9px; height: 9px; }
.msgt { flex: 1; font-family: "Open Sans", "Noto Sans", sans-serif; font-weight: 400; white-space: nowrap; color: #000; }
.l2 .ic + .msgt { margin-left: 2px; }
.msgt .mosaic { margin: 0 2px; }
.num { min-width: 15px; height: 15px; padding: 0 4px; border-radius: 8px; background: #12b5a3; color: #fff; font-size: 8px; line-height: 15px; text-align: center; font-weight: 600; }
.l3 { display: flex; gap: 2px; }
.scroll { position: relative; flex: none; width: 8px; background: #f7f8fa; }
.up { position: absolute; top: 4px; left: 1px; border: 3px solid transparent; border-top: 0; border-bottom: 3px solid #222; }
.thumb { position: absolute; left: 1px; width: 5px; border-radius: 3px; background: #a5adb6; top: 71px; height: 283px; }

/* Conversation */
.chat { flex: 1; min-width: 0; display: flex; flex-direction: column; }
.chead { flex: none; height: 42px; display: flex; align-items: center; border-bottom: 1px solid #e6ebef; padding-left: 15px; }
.chead > .gh .ic { width: 10px; height: 10px; color: #565b61; }
.chead .av { margin: 0 8px 0 10px; }
.chead .name { font-size: 10px; color: #000; width: 25px; }
.tags { display: flex; gap: 2px; }
.timer { display: flex; align-items: center; gap: 4px; height: 18px; margin: 0 7px 0 auto; padding: 0 6px; border-radius: 6px; background: #e9f8ec; color: #3eaa55; }
.timer .ic { width: 10px; height: 10px; }
.cell { width: 45px; height: 41px; border-left: 1px solid #eceff2; color: #26506b; }
.cell .ic { width: 9px; height: 9px; stroke-width: 3; }
.stage { flex: 1; min-height: 0; display: flex; }
.flow { position: relative; flex: 1; min-width: 0; overflow: hidden; }
.paper { position: absolute; inset: 0; width: 100%; height: 100%; fill: none; stroke: #f9f1ee; stroke-width: 1; }
.banner { position: relative; display: flex; align-items: center; gap: 5px; height: 24px; padding-left: 12px; background: #e3f3f7; color: #1690ac; font: 400 10px/15px "Open Sans", "Noto Sans", sans-serif; }
.thread { position: relative; display: flex; flex-direction: column; gap: 14px; padding: 0 14px 0 12px; }
.in, .out { display: flex; gap: 6px; }
.first { padding-right: 32px; }
.out { justify-content: flex-end; }
.bubble { position: relative; min-height: 42px; padding: 6px 45px 6px 8px; border-radius: 5px; background: rgba(240, 241, 243, .88); color: #16191d; font-size: 9px; }
.first .bubble { width: 550px; min-height: 66px; padding: 0 9px 6px; border-radius: 0 0 5px 5px; font-size: 10px; }
.para { margin-top: 15px; }
.para b { font-weight: 700; font-size: 9px; color: #000; }
.bubble > b { display: block; background: none; font-weight: 700; font-size: 9px; line-height: 15px; }
.at { position: absolute; right: 6px; bottom: 0; display: flex; align-items: center; gap: 3px; font-size: 8px; color: #55595f; }
.at .ic { width: 8px; height: 8px; color: #56a2ee; stroke-width: 4; }
.notice { align-self: center; display: flex; align-items: center; height: 21px; margin-bottom: -2px; padding: 0 8px 0 6px; border-radius: 2px; background: #fdeee0; color: #c4661c; font-size: 8px; font-weight: 600; }
.notice .ic { width: 10px; height: 10px; margin-right: 4px; }
.notice .mosaic { margin: 0 2px; }
.notice span { align-self: flex-end; margin-left: 9px; }
.out .tail { width: 156px; }
.chat .thumb { top: 250px; height: 153px; }

/* Multimedia */
.media { flex: none; width: 269px; border-left: 1px solid #e2e5e9; }
.media header { display: flex; align-items: center; gap: 17px; height: 42px; padding-left: 14px; border-bottom: 1px solid #e6ebef; color: #33566f; }
.media h2 { font-size: 11px; color: #48677f; }
.bar { display: flex; align-items: center; justify-content: space-between; height: 24px; padding: 0 8px 0 12px; background: #e9eef1; font-size: 8px; color: #2a7568; }
.bar a { font-weight: 700; color: #129d88; }
.filters { display: flex; align-items: center; justify-content: space-between; padding: 9px 12px 0 10px; }
.chips { display: flex; align-items: center; gap: 5px; padding: 2px 4px 2px 0; border-bottom: 1px solid #dde0e3; }
.chips > .ic { width: 8px; height: 10px; color: #a0a5ab; margin-left: -7px; }
.chip { display: flex; align-items: center; gap: 5px; height: 15px; padding: 0 6px 0 7px; border-radius: 8px; background: #f1f2f4; font-size: 8px; color: #26292e; white-space: nowrap; }
.chip .ic { width: 7px; height: 7px; stroke-width: 4; }
.clear { width: 20px; height: 20px; border-radius: 3px; background: #f1f2f4; color: #84898f; }
.clear .ic { width: 10px; height: 10px; }
.filecard { position: relative; display: grid; place-items: center; width: 60px; height: 60px; margin: 8px 0 0 10px; border: 1px solid #d3d6da; border-radius: 3px; color: #0a0a0a; }
.filecard .ic { width: 38px; height: 38px; stroke-width: 1.300; }
.filecard b { position: absolute; right: 2px; bottom: 2px; height: 12px; padding: 0 4px; border-radius: 6px; background: #5a5a65; color: #fff; font-size: 8px; line-height: 12px; }
</style>
